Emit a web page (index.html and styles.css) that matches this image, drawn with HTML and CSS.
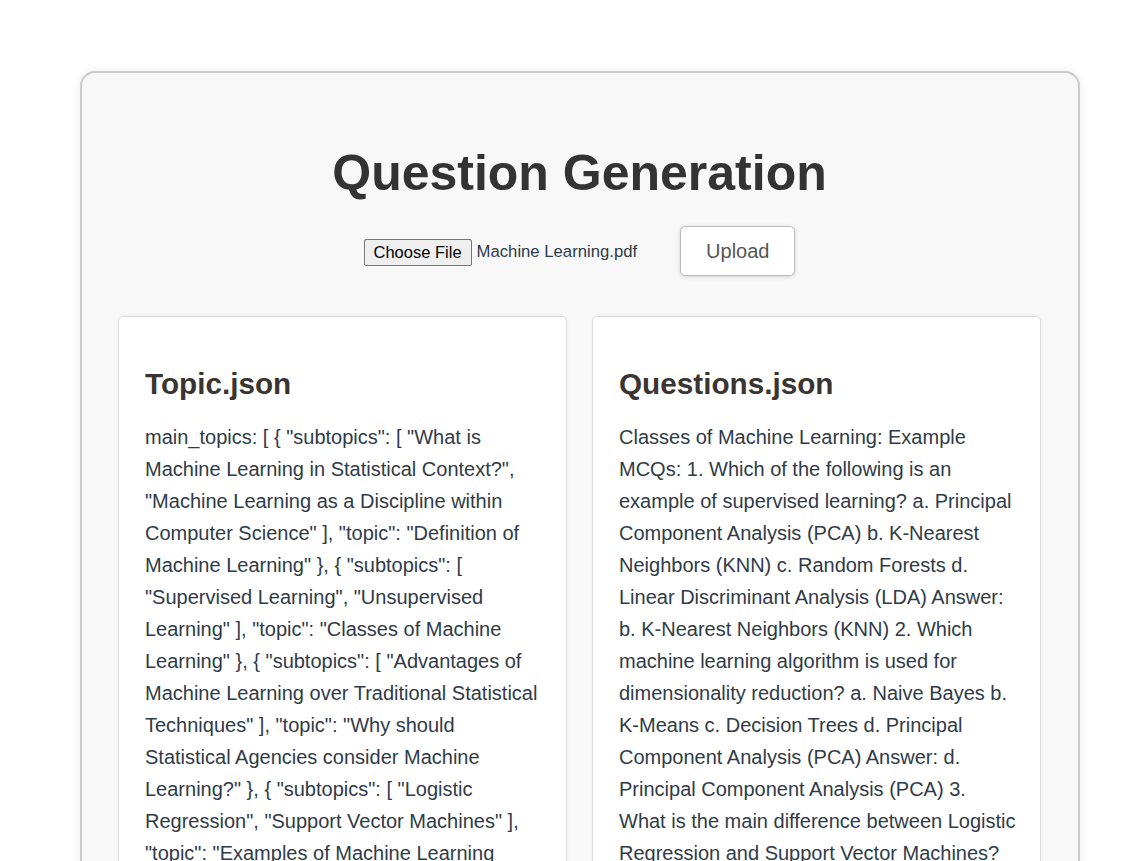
FILE: index.html
```html
<!DOCTYPE html>
<html lang="en">
<head>
<meta charset="utf-8">
<title>Question Generation</title>
<link rel="stylesheet" href="styles.css">
</head>
<body>
<div class="container">
  <h1 class="title">Question Generation</h1>
  <form class="upload-row">
    <div class="file-input">
      <button type="button" class="choose-btn">Choose File</button>
      <span class="file-name">Machine Learning.pdf</span>
    </div>
    <button type="button" class="upload-btn">Upload</button>
  </form>
  <div class="cards">
    <div class="card">
      <h2 class="card-title">Topic.json</h2>
      <p class="card-text">main_topics: [ { "subtopics": [ "What is Machine Learning in Statistical Context?", "Machine Learning as a Discipline within Computer Science" ], "topic": "Definition of Machine Learning" }, { "subtopics": [ "Supervised Learning", "Unsupervised Learning" ], "topic": "Classes of Machine Learning" }, { "subtopics": [ "Advantages of Machine Learning over Traditional Statistical Techniques" ], "topic": "Why should Statistical Agencies consider Machine Learning?" }, { "subtopics": [ "Logistic Regression", "Support Vector Machines" ], "topic": "Examples of Machine Learning Algorithms" }, { "subtopics": [ "Decision Trees", "Random Forests" ], "topic": "Tree Based Methods" } ]</p>
    </div>
    <div class="card">
      <h2 class="card-title">Questions.json</h2>
      <p class="card-text">Classes of Machine Learning: Example MCQs: 1. Which of the following is an example of supervised learning? a. Principal Component Analysis (PCA) b. K-Nearest Neighbors (KNN) c. Random Forests d. Linear Discriminant Analysis (LDA) Answer: b. K-Nearest Neighbors (KNN) 2. Which machine learning algorithm is used for dimensionality reduction? a. Naive Bayes b. K-Means c. Decision Trees d. Principal Component Analysis (PCA) Answer: d. Principal Component Analysis (PCA) 3. What is the main difference between Logistic Regression and Support Vector Machines? a. Logistic Regression is used for classification only b. Support Vector Machines find a maximum margin hyperplane</p>
    </div>
  </div>
</div>
</body>
</html>
```

FILE: styles.css
```css
html, body {
  margin: 0;
  padding: 0;
  background: #ffffff;
  font-family: "Liberation Sans", Arial, sans-serif;
}

.container {
  box-sizing: border-box;
  width: 1000px;
  margin: 71px 0 0 80px;
  padding: 36px 37px 40px 36px;
  background: #f8f8f8;
  border: 2px solid #cccccc;
  border-radius: 15px;
  box-shadow: 0 0 10px rgba(0, 0, 0, 0.08);
}

.title {
  margin: 36px 0 24px;
  font-size: 50px;
  font-weight: bold;
  line-height: 57px;
  color: #333333;
  text-align: center;
}

.upload-row {
  display: flex;
  justify-content: center;
  align-items: center;
  gap: 43px;
  margin: 0 0 40px;
}

.file-input {
  display: flex;
  align-items: center;
  gap: 5px;
  padding-top: 2px;
}

.choose-btn {
  font-family: "Liberation Sans", Arial, sans-serif;
  font-size: 16.5px;
  color: #000000;
  background: #efefef;
  border: 1px solid #767676;
  border-radius: 2px;
  height: 27px;
  padding: 1px 9px;
  line-height: 20px;
}

.file-name {
  font-size: 16.7px;
  color: #2f3b48;
}

.upload-btn {
  font-family: "Liberation Sans", Arial, sans-serif;
  font-size: 20px;
  line-height: 24px;
  color: #555555;
  background: #ffffff;
  border: 1px solid #bbbbbb;
  border-radius: 5px;
  padding: 12px 25px;
  box-shadow: 0 1px 4px rgba(0, 0, 0, 0.15);
}

.cards {
  display: grid;
  grid-template-columns: 1fr 1fr;
  gap: 25px;
}

.card {
  background: #ffffff;
  border: 1px solid #dddddd;
  border-radius: 5px;
  padding: 26px 22px 26px 26px;
  box-shadow: 0 0 4px rgba(0, 0, 0, 0.04);
}

.card-title {
  margin: 25px 0 21px;
  font-size: 29.7px;
  line-height: 32px;
  font-weight: bold;
  color: #3a3531;
}

.card-text {
  margin: 0;
  font-size: 20px;
  line-height: 32px;
  color: #2f3b48;
}
```
